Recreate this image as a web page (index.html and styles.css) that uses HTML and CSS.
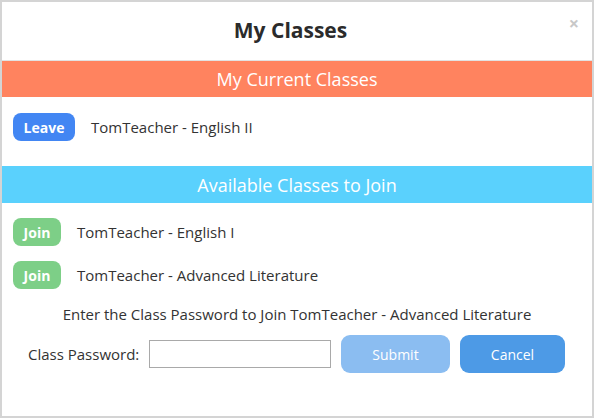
FILE: index.html
```html
<!DOCTYPE html>
<html>
<head>
<meta charset="utf-8">
<link rel="stylesheet" href="styles.css">
</head>
<body>
<div class="dialog">
  <div class="header">
    <h1 class="title">My Classes</h1>
    <span class="close">&#215;</span>
  </div>
  <div class="bar bar-current">My Current Classes</div>
  <div class="list list-current">
    <div class="row">
      <button class="btn-small btn-leave">Leave</button>
      <span class="class-name">TomTeacher - English II</span>
    </div>
  </div>
  <div class="bar bar-available">Available Classes to Join</div>
  <div class="list list-available">
    <div class="row">
      <button class="btn-small btn-join">Join</button>
      <span class="class-name">TomTeacher - English I</span>
    </div>
    <div class="row">
      <button class="btn-small btn-join">Join</button>
      <span class="class-name">TomTeacher - Advanced Literature</span>
    </div>
  </div>
  <p class="prompt">Enter the Class Password to Join TomTeacher - Advanced Literature</p>
  <div class="form-row">
    <label class="pw-label">Class Password:</label>
    <input class="pw-input" type="password">
    <button class="btn-big btn-submit">Submit</button>
    <button class="btn-big btn-cancel">Cancel</button>
  </div>
</div>
</body>
</html>
```
FILE: styles.css
```css
* { box-sizing: border-box; }
html, body { margin: 0; padding: 0; }
body {
  font-family: "Open Sans", "Liberation Sans", sans-serif;
  color: #333;
  background: #fff;
}
.dialog {
  width: 594px;
  height: 418px;
  border: 2px solid #d4d4d4;
  display: flex;
  flex-direction: column;
}
.header {
  position: relative;
  height: 59px;
  border-bottom: 1px solid #e2e2e2;
  display: flex;
  align-items: center;
  justify-content: center;
  padding-right: 13px;
  padding-bottom: 3px;
}
.title {
  margin: 0;
  font-size: 21px;
  font-weight: 700;
  color: #2b2b2b;
}
.close {
  position: absolute;
  right: 13px;
  top: 11px;
  font-size: 18px;
  line-height: 20px;
  color: #c8c8c8;
  font-weight: 700;
}
.bar {
  height: 37px;
  display: flex;
  align-items: center;
  justify-content: center;
  color: #fff;
  font-size: 18px;
}
.bar-current { background: #ff835f; height: 36px; }
.bar-available { background: #5ad1fd; }
.list { display: flex; flex-direction: column; }
.list-current { padding: 16px 0 25px 11px; }
.list-available { padding: 15px 0 0 11px; gap: 15px; }
.row {
  display: flex;
  align-items: center;
  height: 28px;
}
.btn-small {
  border: none;
  height: 28px;
  border-radius: 8px;
  color: #fff;
  font-family: inherit;
  font-weight: 700;
  font-size: 14px;
  padding: 0;
}
.btn-leave { background: #4286f3; width: 62px; margin-right: 16px; }
.btn-join { background: #7dcf87; width: 48px; margin-right: 16px; }
.class-name { font-size: 15px; color: #333; }
.prompt {
  margin: 15px 0 0;
  text-align: center;
  font-size: 15px;
  line-height: 21px;
}
.form-row {
  display: flex;
  align-items: center;
  padding-left: 26px;
  margin-top: 10px;
  height: 38px;
}
.pw-label { font-size: 15px; width: 121px; }
.pw-input {
  width: 182px;
  height: 28px;
  border: 1px solid #a9a9a9;
  margin-right: 10px;
}
.btn-big {
  border: none;
  height: 38px;
  border-radius: 9px;
  color: #fff;
  font-family: inherit;
  font-size: 14px;
  padding: 0;
}
.btn-submit { background: #8bbdf1; width: 109px; margin-right: 10px; }
.btn-cancel { background: #4d9ae6; width: 105px; }
```
